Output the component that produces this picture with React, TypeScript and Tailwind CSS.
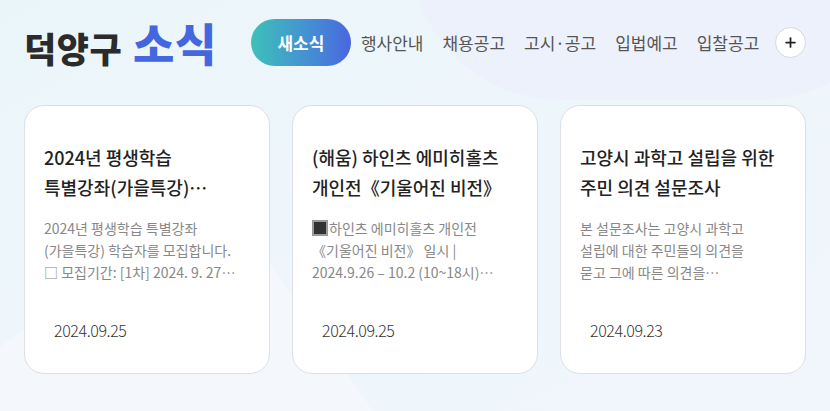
import React from "react";
import { Plus } from "lucide-react";

type NewsItem = {
  title: string;
  summary: React.ReactNode;
  date: string;
};

const menus = ["행사안내", "채용공고", "고시·공고", "입법예고", "입찰공고"];

const news: NewsItem[] = [
  {
    title: "2024년 평생학습\n특별강좌(가을특강)\n학습자 모집",
    summary:
      "2024년 평생학습 특별강좌\n(가을특강) 학습자를 모집합니다.\n□ 모집기간: [1차] 2024. 9. 27\n(금) ~ 10. 4.(금)",
    date: "2024.09.25",
  },
  {
    title: "(해움) 하인츠 에미히홀츠\n개인전《기울어진 비전》",
    summary: (
      <>
        <span
          aria-label="■"
          className="mr-[1px] inline-block h-[16px] w-[16px] translate-y-[2px] border-2 border-[#9a9a9a] bg-[#333]"
        />
        {"하인츠 에미히홀츠 개인전\n《기울어진 비전》  일시 |\n2024.9.26 – 10.2 (10~18시) \n장소 | 해움미술관"}
      </>
    ),
    date: "2024.09.25",
  },
  {
    title: "고양시 과학고 설립을 위한\n주민 의견 설문조사",
    summary:
      "본 설문조사는 고양시 과학고\n설립에 대한 주민들의 의견을\n묻고 그에 따른 의견을\n수렴하고자 합니다.",
    date: "2024.09.23",
  },
];

const font = "font-['Noto_Sans_CJK_KR','Noto_Sans',sans-serif]";

export default function App() {
  return (
    <div
      className={`relative h-[411px] w-[830px] overflow-hidden bg-gradient-to-br from-[#eaf5fa] via-[#eef6fb] to-[#f1f6fb] ${font}`}
    >
      <div className="absolute -left-[120px] top-[300px] h-[400px] w-[500px] rotate-[-35deg] bg-[#f4f8fc]" />
      <div className="absolute -right-[80px] -top-[200px] h-[300px] w-[500px] rounded-full bg-[#edf1fb]" />

      <div className="relative">
        <header className="flex items-center pl-[24px] pt-[19px]">
          <h1 className="flex h-[47px] items-end gap-[11px] font-black">
            <span className="text-[35px] leading-[37px] tracking-[0.5px] text-[#2b2b2b]">덕양구</span>
            <span className="text-[45px] leading-[47px] tracking-[0.5px] text-[#4467df]">소식</span>
          </h1>
          <nav className="ml-[34px] flex items-center">
            <span className="flex h-[47px] w-[100px] items-center justify-center rounded-full bg-gradient-to-r from-[#3ec0b8] to-[#4a66e0] text-[17px] font-bold text-white">
              새소식
            </span>
            <ul className="ml-[10px] flex items-center gap-[19px] text-[17px] text-[#555]">
              {menus.map((m) => (
                <li key={m}>{m}</li>
              ))}
            </ul>
            <button className="ml-[16px] flex h-[31px] w-[31px] items-center justify-center rounded-full border border-[#d6d9de] bg-white text-[#222]">
              <Plus size={15} strokeWidth={2.8} />
            </button>
          </nav>
        </header>

        <section className="mt-[39px] flex gap-[22px] pl-[24px]">
          {news.map((n, i) => (
            <NewsCard key={i} item={n} />
          ))}
        </section>
      </div>
    </div>
  );
}

const NewsCard = ({ item }: { item: NewsItem }) => {
  return (
    <article className="flex h-[269px] w-[246px] flex-col rounded-[20px] border border-[#dcdfe4] bg-white px-[19px] pt-[36px]">
      <h2 className="line-clamp-2 whitespace-pre-line break-keep text-[18px] font-medium leading-[30px] text-[#222]">
        {item.title}
      </h2>
      <p className="mt-[15px] line-clamp-3 whitespace-pre-line break-keep text-[14px] leading-[22px] text-[#888]">
        {item.summary}
      </p>
      <span className="mt-auto mb-[33px] pl-[10px] text-[16px] font-light leading-[20px] tracking-[-0.4px] text-[#333]">
        {item.date}
      </span>
    </article>
  );
};
